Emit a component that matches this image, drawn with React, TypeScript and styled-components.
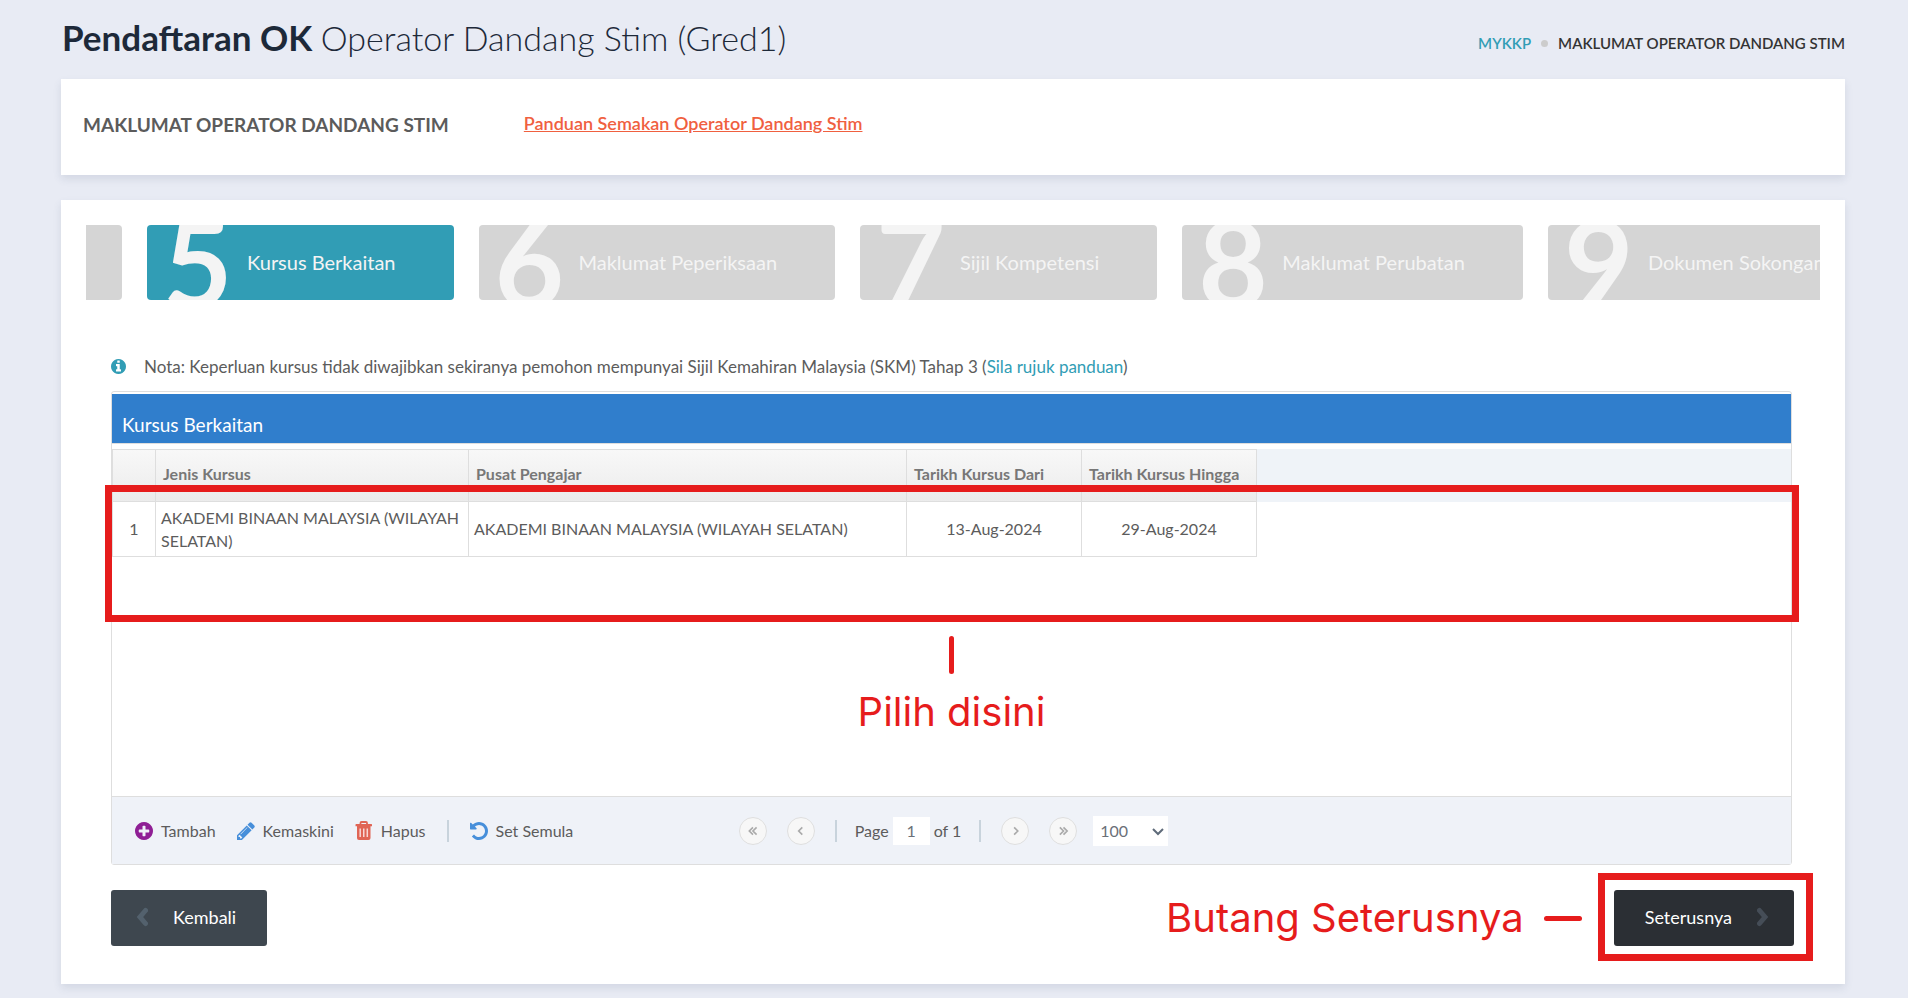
import React from "react";
import styled, { createGlobalStyle } from "styled-components";

const accent = "#319db5";
const line = "#dedede";
const marker = "#e61c1c";

const GlobalStyle = createGlobalStyle`
  *, *::before, *::after { box-sizing: border-box; }
  body {
    margin: 0;
    background: #e8ebf4;
    color: #5c5c5c;
    font-family: Lato, "Liberation Sans", sans-serif;
    font-size: 16px;
    line-height: 24px;
  }
  a { color: ${accent}; text-decoration: none; }
  button, input, select { font: inherit; color: inherit; }
`;

const Page = styled.div`
  min-height: 100vh;
  padding: 0 63px 14px 61px;
`;

const PageHeader = styled.header`
  display: flex;
  justify-content: space-between;
  height: 79px;
`;

const PageTitle = styled.h1`
  margin: 0;
  padding: 13px 0 0 1px;
  color: #1d2939;
  font-size: 35px;
  line-height: 48px;
  font-weight: 700;
  white-space: nowrap;
`;

const TitleDetail = styled.span`
  font-size: 34px;
  font-weight: 300;
`;

const Breadcrumb = styled.nav`
  display: flex;
  align-items: center;
  gap: 10px;
  height: 24px;
  margin-top: 31px;
  font-size: 15px;
  font-weight: 600;
  color: #333;
  white-space: nowrap;
`;

const CrumbDot = styled.span`
  width: 7px;
  height: 7px;
  border-radius: 50%;
  background: #ccc;
`;

const Panel = styled.section`
  background: #fff;
  box-shadow: 0 4px 8px rgba(60, 70, 110, 0.12);
`;

const IntroPanel = styled(Panel)`
  display: flex;
  gap: 75px;
  height: 96px;
  margin-bottom: 25px;
  padding: 33px 22px;
`;

const IntroHeading = styled.h2`
  margin: 0;
  font-size: 19px;
  line-height: 26px;
  font-weight: 700;
  color: #5b5b5b;
`;

const GuideLink = styled.a`
  display: block;
  color: #f0603f;
  font-size: 18px;
  line-height: 22px;
  font-weight: 600;
  text-decoration: underline;
`;

const WizardPanel = styled(Panel)`
  padding: 25px 25px 38px;
`;

const StepList = styled.ol`
  display: flex;
  gap: 25px;
  margin: 0;
  padding: 0;
  overflow: hidden;
  list-style: none;
`;

const StepItem = styled.li`
  flex: none;
`;

const StepLink = styled.a<{ $active?: boolean }>`
  display: flex;
  align-items: center;
  height: 75px;
  padding: 0 58px 0 16px;
  overflow: hidden;
  border-radius: 4px;
  background: ${(p) => (p.$active ? accent : "#d5d5d5")};
  color: #f4f4f4;
  font-size: 20px;
  white-space: nowrap;
`;

const StepNumber = styled.span`
  width: 84px;
  height: 75px;
  font-size: 120px;
  line-height: 75px;
  font-weight: 700;
`;

const StepLabel = styled.span`
  padding-bottom: 2px;
`;

const PassedStep = styled.li`
  flex: none;
  width: 36px;
  height: 75px;
  border-radius: 0 4px 4px 0;
  background: #d5d5d5;
`;

const StepContent = styled.div`
  padding: 54px 26px 0 25px;
`;

const Note = styled.p`
  display: flex;
  align-items: center;
  gap: 18px;
  margin: 0 0 12px;
  font-size: 17px;
  line-height: 25px;
`;

const Grid = styled.div`
  position: relative;
  margin-right: 2px;
  border: 1px solid ${line};
  border-radius: 3px;
`;

const GridCaption = styled.h3`
  margin: 2px 0 5px;
  padding: 18px 10px 6px;
  border-bottom: 1px solid ${line};
  background: #307ecc;
  background-clip: padding-box;
  color: #fff;
  font-size: 19px;
  line-height: 25px;
  font-weight: 400;
`;

const GridBody = styled.div`
  height: 347px;
  background: linear-gradient(#eff3f8 53px, transparent 53px);
`;

const Table = styled.table`
  border-collapse: collapse;
  table-layout: fixed;
  width: 1145px;
`;

const NumberCol = styled.col` width: 43px; `;
const CourseCol = styled.col` width: 313px; `;
const CentreCol = styled.col` width: 438px; `;
const DateCol = styled.col` width: 175px; `;

const HeadRow = styled.tr`
  height: 52px;
  background: linear-gradient(#f8f8f8, #ebebeb);
`;

const HeadCell = styled.th`
  padding: 0 7px 4px;
  border: 1px solid ${line};
  color: #777;
  font-weight: 700;
  text-align: left;
  white-space: nowrap;
`;

const Cell = styled.td<{ $center?: boolean }>`
  height: 55px;
  padding: 0 5px 1px;
  border: 1px solid ${line};
  line-height: 23px;
  text-align: ${(p) => (p.$center ? "center" : "left")};
`;

const GridFooter = styled.div`
  display: grid;
  grid-template-columns: 1fr auto 1fr;
  align-items: center;
  height: 68px;
  padding: 0 19px 0 23px;
  border-top: 1px solid ${line};
  background: #eff2f8;
`;

const Tools = styled.div`
  display: flex;
  align-items: center;
  gap: 21px;
`;

const ToolButton = styled.button`
  display: flex;
  align-items: center;
  gap: 8px;
  padding: 0;
  border: 0;
  background: none;
  cursor: pointer;
`;

const Separator = styled.span`
  width: 2px;
  height: 22px;
  background: #c8d3dc;
`;

const Pager = styled.div`
  display: flex;
  align-items: center;
  gap: 20px;
`;

const PagerButton = styled.button`
  display: flex;
  align-items: center;
  justify-content: center;
  width: 28px;
  height: 28px;
  padding: 0;
  border: 1px solid #dfdfdf;
  border-radius: 50%;
  background: #f7f7f7;
  color: #aaa;
`;

const PageField = styled.label`
  display: flex;
  align-items: center;
  gap: 4px;
  margin: 0 -2px;
`;

const PageInput = styled.input`
  width: 37px;
  height: 28px;
  padding: 0;
  border: 0;
  background: #fff;
  text-align: center;
  color: #6b7078;
`;

const PageSize = styled.div`
  position: relative;
  height: 30px;
  margin-left: -4px;
`;

const SizeSelect = styled.select`
  appearance: none;
  width: 75px;
  height: 30px;
  padding: 0 7px;
  border: 0;
  border-radius: 0;
  background: #fff;
  color: #6b7078;
`;

const SelectArrow = styled.svg`
  position: absolute;
  right: 4px;
  top: 12px;
  pointer-events: none;
`;

const Actions = styled.div`
  display: flex;
  align-items: center;
  margin-top: 25px;
`;

const ActionButton = styled.button<{ $primary?: boolean }>`
  display: flex;
  align-items: center;
  gap: 25px;
  height: 56px;
  padding: ${(p) => (p.$primary ? "0 25px 2px 31px" : "0 31px 2px 25px")};
  border: 0;
  border-radius: 3px;
  background: ${(p) => (p.$primary ? "#2b2f34" : "#3e474f")};
  color: #fff;
  font-size: 18px;
  cursor: pointer;
`;

const MarkerText = styled.span`
  color: ${marker};
  font-family: Inter, sans-serif;
  font-size: 40px;
  line-height: 48px;
  white-space: nowrap;
`;

const RowMarker = styled.div`
  position: absolute;
  top: 93px;
  left: -7px;
  right: -8px;
  height: 137px;
  border: 7px solid ${marker};
`;

const RowHint = styled.div`
  position: absolute;
  top: 244px;
  left: 0;
  right: 0;
  display: flex;
  flex-direction: column;
  align-items: center;
  gap: 14px;
`;

const VerticalDash = styled.span`
  width: 5px;
  height: 38px;
  border-radius: 3px;
  background: ${marker};
`;

const NextHint = styled.div`
  display: flex;
  align-items: center;
  gap: 20px;
  margin: 0 32px 0 auto;
`;

const HorizontalDash = styled.span`
  width: 38px;
  height: 5px;
  border-radius: 3px;
  background: ${marker};
`;

const NextMarker = styled.div`
  position: relative;
  &::after {
    content: "";
    position: absolute;
    inset: -17px -19px -15px -16px;
    border: 7px solid ${marker};
    pointer-events: none;
  }
`;

const glyphs = {
  info: "M1152 1376v-160q0-14-9-23t-23-9h-96v-512q0-14-9-23t-23-9h-320q-14 0-23 9t-9 23v160q0 14 9 23t23 9h96v320h-96q-14 0-23 9t-9 23v160q0 14 9 23t23 9h448q14 0 23-9t9-23zm-128-896v-160q0-14-9-23t-23-9h-192q-14 0-23 9t-9 23v160q0 14 9 23t23 9h192q14 0 23-9t9-23zm640 416q0 209-103 385.5t-279.5 279.5-385.5 103-385.5-103-279.5-279.5-103-385.5 103-385.5 279.5-279.5 385.5-103 385.5 103 279.5 279.5 103 385.5z",
  plus: "M1344 960v-128q0-26-19-45t-45-19h-256v-256q0-26-19-45t-45-19h-128q-26 0-45 19t-19 45v256h-256q-26 0-45 19t-19 45v128q0 26 19 45t45 19h256v256q0 26 19 45t45 19h128q26 0 45-19t19-45v-256h256q26 0 45-19t19-45zm320-64q0 209-103 385.5t-279.5 279.5-385.5 103-385.5-103-279.5-279.5-103-385.5 103-385.5 279.5-279.5 385.5-103 385.5 103 279.5 279.5 103 385.5z",
  pencil: "M491 1536l91-91-235-235-91 91v107h128v128h107zm523-928q0-22-22-22-10 0-17 7l-542 542q-7 7-7 17 0 22 22 22 10 0 17-7l542-542q7-7 7-17zm-54-192l416 416-832 832h-416v-416zm683 96q0 53-37 90l-166 166-416-416 166-165q36-38 90-38 53 0 91 38l235 234q37 39 37 91z",
  undo: "M1664 896q0 156-61 298t-164 245-245 164-298 61q-172 0-327-72.5t-264-204.5q-7-10-6.5-22.5t8.5-20.5l137-138q10-9 25-9 16 2 23 12 73 95 179 147t225 52q104 0 198.5-40.5t163.5-109.5 109.5-163.5 40.5-198.5-40.5-198.5-109.5-163.5-163.5-109.5-198.5-40.5q-98 0-188 35.5t-160 101.5l137 138q31 30 14 69-17 40-59 40h-448q-26 0-45-19t-19-45v-448q0-42 40-59 39-17 69 14l130 129q107-101 244.5-156.5t284.5-55.5q156 0 298 61t245 164 164 245 61 298z",
};

function Icon({ name, color, size = 18 }: { name: keyof typeof glyphs; color: string; size?: number }) {
  return (
    <svg width={size} height={size} viewBox="128 128 1536 1536" fill={color} aria-hidden="true">
      <path d={glyphs[name]} />
    </svg>
  );
}

function TrashIcon() {
  return (
    <svg width="18" height="19" viewBox="0 0 18 19" aria-hidden="true">
      <path d="M5.500 3.500V2Q5.500 1 6.500 1H11Q12 1 12 2V3.500" fill="none" stroke="#e06555" strokeWidth="1.8" />
      <path d="M1 3H16.500Q17 3 17 4V5.200H0.500V4Q0.500 3 1 3Z" fill="#e06555" />
      <path d="M2 5H15.500V17Q15.500 19 13.500 19H4Q2 19 2 17Z" fill="#e06555" />
      <path d="M5.200 7.500V16M8.750 7.500V16M12.300 7.500V16" stroke="#f8d8d5" strokeWidth="1.500" />
    </svg>
  );
}

const chevrons = {
  first: "M6.5 1.5L2.5 5.5L6.5 9.5M10.5 1.5L6.5 5.5L10.5 9.5",
  prev: "M8 1.5L4 5.5L8 9.5",
  next: "M4.5 1.5L8.5 5.5L4.5 9.5",
  last: "M2 1.5L6 5.5L2 9.5M6 1.5L10 5.5L6 9.5",
};

function PagerControl({ kind, label }: { kind: keyof typeof chevrons; label: string }) {
  return (
    <PagerButton type="button" aria-label={label} disabled>
      <svg width="11" height="10" viewBox="0 0 12 11" fill="none" stroke="currentColor" strokeWidth="1.8">
        <path d={chevrons[kind]} />
      </svg>
    </PagerButton>
  );
}

const steps = [
  { number: 5, label: "Kursus Berkaitan" },
  { number: 6, label: "Maklumat Peperiksaan" },
  { number: 7, label: "Sijil Kompetensi" },
  { number: 8, label: "Maklumat Perubatan" },
  { number: 9, label: "Dokumen Sokongan" },
];

const courses = [
  {
    type: "AKADEMI BINAAN MALAYSIA (WILAYAH SELATAN)",
    centre: "AKADEMI BINAAN MALAYSIA (WILAYAH SELATAN)",
    from: "13-Aug-2024",
    to: "29-Aug-2024",
  },
];

export default function App() {
  return (
    <>
      <GlobalStyle />
      <Page>
        <PageHeader>
          <PageTitle>
            Pendaftaran OK <TitleDetail>Operator Dandang Stim (Gred1)</TitleDetail>
          </PageTitle>
          <Breadcrumb aria-label="Breadcrumb">
            <a href="#mykkp">MYKKP</a>
            <CrumbDot />
            <span>MAKLUMAT OPERATOR DANDANG STIM</span>
          </Breadcrumb>
        </PageHeader>

        <IntroPanel>
          <IntroHeading>MAKLUMAT OPERATOR DANDANG STIM</IntroHeading>
          <div>
            <GuideLink href="#panduan">Panduan Semakan Operator Dandang Stim</GuideLink>
          </div>
        </IntroPanel>

        <WizardPanel>
          <StepList>
            <PassedStep />
            {steps.map((step) => (
              <StepItem key={step.number}>
                <StepLink
                  href={`#langkah-${step.number}`}
                  $active={step.number === 5}
                  aria-current={step.number === 5 ? "step" : undefined}
                >
                  <StepNumber>{step.number}</StepNumber>
                  <StepLabel>{step.label}</StepLabel>
                </StepLink>
              </StepItem>
            ))}
          </StepList>

          <StepContent>
            <Note>
              <Icon name="info" color={accent} size={15} />
              <span>
                Nota: Keperluan kursus tidak diwajibkan sekiranya pemohon mempunyai Sijil Kemahiran
                Malaysia (SKM) Tahap 3 (<a href="#rujuk-panduan">Sila rujuk panduan</a>)
              </span>
            </Note>

            <Grid>
              <GridCaption>Kursus Berkaitan</GridCaption>
              <GridBody>
                <Table>
                  <colgroup>
                    <NumberCol />
                    <CourseCol />
                    <CentreCol />
                    <DateCol />
                    <DateCol />
                  </colgroup>
                  <thead>
                    <HeadRow>
                      <HeadCell aria-label="No." />
                      <HeadCell>Jenis Kursus</HeadCell>
                      <HeadCell>Pusat Pengajar</HeadCell>
                      <HeadCell>Tarikh Kursus Dari</HeadCell>
                      <HeadCell>Tarikh Kursus Hingga</HeadCell>
                    </HeadRow>
                  </thead>
                  <tbody>
                    {courses.map((course, index) => (
                      <tr key={course.from}>
                        <Cell $center>{index + 1}</Cell>
                        <Cell>{course.type}</Cell>
                        <Cell>{course.centre}</Cell>
                        <Cell $center>{course.from}</Cell>
                        <Cell $center>{course.to}</Cell>
                      </tr>
                    ))}
                  </tbody>
                </Table>
              </GridBody>
              <GridFooter>
                <Tools>
                  <ToolButton type="button">
                    <Icon name="plus" color="#8f1f95" />
                    Tambah
                  </ToolButton>
                  <ToolButton type="button">
                    <Icon name="pencil" color="#478fda" />
                    Kemaskini
                  </ToolButton>
                  <ToolButton type="button">
                    <TrashIcon />
                    Hapus
                  </ToolButton>
                  <Separator />
                  <ToolButton type="button">
                    <Icon name="undo" color="#478fda" />
                    Set Semula
                  </ToolButton>
                </Tools>
                <Pager>
                  <PagerControl kind="first" label="Halaman pertama" />
                  <PagerControl kind="prev" label="Halaman sebelum" />
                  <Separator />
                  <PageField>
                    Page
                    <PageInput defaultValue="1" />
                    of 1
                  </PageField>
                  <Separator />
                  <PagerControl kind="next" label="Halaman seterusnya" />
                  <PagerControl kind="last" label="Halaman terakhir" />
                  <PageSize>
                    <SizeSelect aria-label="Rekod setiap halaman" defaultValue="100">
                      <option>50</option>
                      <option>100</option>
                      <option>200</option>
                    </SizeSelect>
                    <SelectArrow width="12" height="8" viewBox="0 0 12 8" fill="none" stroke="#5f6b7a" strokeWidth="2">
                      <path d="M1 1L6 6L11 1" />
                    </SelectArrow>
                  </PageSize>
                </Pager>
              </GridFooter>
              <RowMarker />
              <RowHint>
                <VerticalDash />
                <MarkerText>Pilih disini</MarkerText>
              </RowHint>
            </Grid>

            <Actions>
              <ActionButton type="button">
                <svg width="12" height="20" viewBox="0 0 12 20" fill="none" stroke="#53616d" strokeWidth="5" strokeLinecap="round">
                  <path d="M9.500 3.500L4 10L9.500 16.500" />
                </svg>
                Kembali
              </ActionButton>
              <NextHint>
                <MarkerText>Butang Seterusnya</MarkerText>
                <HorizontalDash />
              </NextHint>
              <NextMarker>
                <ActionButton type="button" $primary>
                  Seterusnya
                  <svg width="12" height="20" viewBox="0 0 12 20" fill="none" stroke="#454d57" strokeWidth="5" strokeLinecap="round">
                    <path d="M2.500 3.500L8 10L2.500 16.500" />
                  </svg>
                </ActionButton>
              </NextMarker>
            </Actions>
          </StepContent>
        </WizardPanel>
      </Page>
    </>
  );
}
